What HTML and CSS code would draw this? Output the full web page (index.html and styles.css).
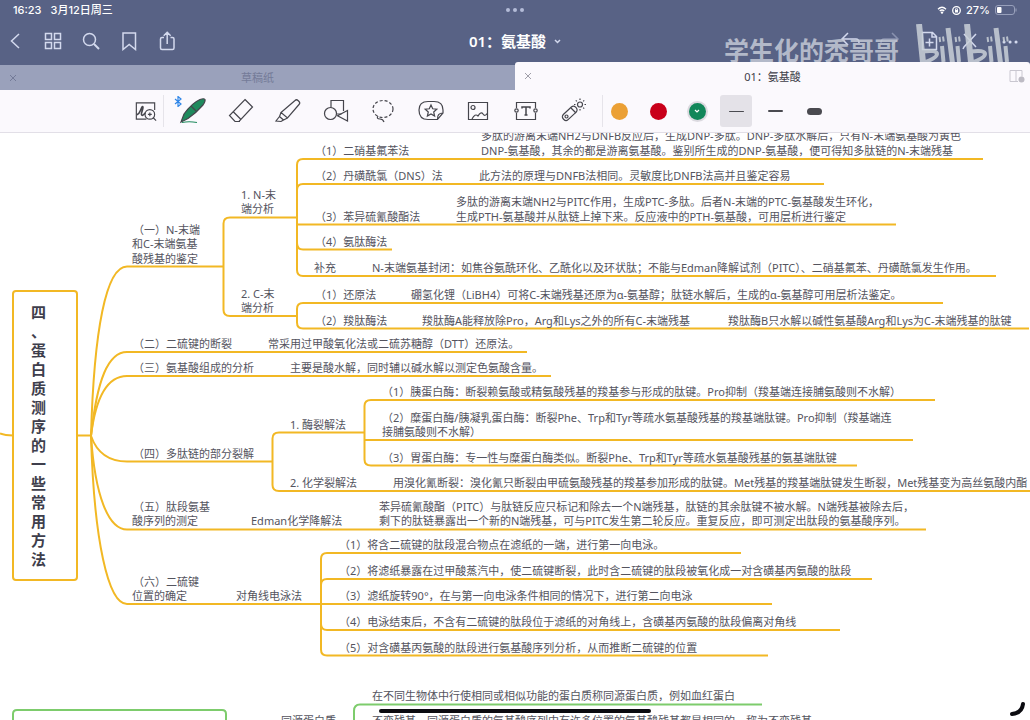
FILE: index.html
```html
<!DOCTYPE html>
<html lang="zh-CN">
<head>
<meta charset="utf-8">
<title>01：氨基酸</title>
<link rel="stylesheet" href="styles.css">
</head>
<body>
<header class="top">
	<div class="status">
		<div class="status-left"><span>16:23</span><span>3月12日周三</span></div>
		<div class="dots"><i></i><i></i><i></i></div>
		<div class="status-right">
			<svg width="10" height="8" viewBox="0 0 10 8"><path class="w" d="M1 3.2Q5-.6 9 3.2M2.7 5Q5 3 7.3 5"/><circle cx="5" cy="6.6" r="1.2" fill="#fff"/></svg>
			<svg width="9" height="9" viewBox="0 0 9 9"><circle class="w" cx="4.5" cy="4.5" r="3.8"/><rect x="3" y="4" width="3" height="2.5" fill="#fff"/><path d="M3.5 4V2.8h2V4" stroke="#fff" stroke-width=".8"/></svg>
			<span>27%</span>
			<svg width="22" height="10" viewBox="0 0 22 10"><rect x=".5" y=".5" width="19" height="9" rx="2.5" fill="none" stroke="#98a0bb"/><rect x="2" y="2" width="4.5" height="6" rx="1" fill="#fff"/><path d="M21 3.5v3" stroke="#98a0bb"/></svg>
		</div>
	</div>
	<nav class="nav">
		<div class="nav-left">
			<button aria-label="返回"><svg width="20" height="20" viewBox="0 0 20 20"><path d="M14 3L6.5 10l7.5 7"/></svg></button>
			<button aria-label="缩略图"><svg width="20" height="20" viewBox="0 0 20 20"><path d="M2.5 2.5h6v6h-6zM11.5 2.5h6v6h-6zM2.5 11.5h6v6h-6zM11.5 11.5h6v6h-6z"/></svg></button>
			<button aria-label="搜索"><svg width="20" height="20" viewBox="0 0 20 20"><circle cx="8.5" cy="8.5" r="6"/><path d="M13 13l5 5" stroke-width="2"/></svg></button>
			<button aria-label="书签"><svg width="20" height="20" viewBox="0 0 20 20"><path d="M4 2h12.5v16.5L10.2 13.5 4 18.5z"/></svg></button>
			<button aria-label="分享"><svg width="20" height="20" viewBox="0 0 20 20"><path d="M7 6.500H5q-1.500 0-1.500 1.500v9q0 1.500 1.500 1.500h10.500q1.500 0 1.500-1.500V8q0-1.500-1.500-1.500h-2M10.2 13V1.500M6.700 4.800l3.500-3.500 3.500 3.500"/></svg></button>
		</div>
		<button class="title">01：氨基酸 <svg width="7" height="5" viewBox="0 0 7 5"><path d="M1 1l2.5 2.5L6 1"/></svg></button>
		<div class="nav-right">
			<button aria-label="撤销"><svg width="20" height="20" viewBox="0 0 20 20"><path d="M2 8h14q3 0 3 4M8 2L2 8l6 6"/></svg></button>
			<button aria-label="重做" class="dim"><svg width="20" height="20" viewBox="0 0 20 20"><path d="M1 12q0-4 3-4h14M12 2l6 6-6 6"/></svg></button>
			<button aria-label="添加页面"><svg width="20" height="20" viewBox="0 0 20 20"><path d="M2.5 1.5h10l4 4v13h-14zM12 2v4h4.500M5.500 11.500h8M9.500 7.500v8"/></svg></button>
			<button aria-label="只读模式"><svg width="20" height="20" viewBox="0 0 20 20"><path d="M4 3l12 13M16 3L4 16l-1 2"/></svg></button>
			<button aria-label="更多"><svg width="20" height="20" viewBox="0 0 20 20"><path d="M4 11h.1M10 11h.1M16 11h.1" stroke-width="3" stroke-linecap="round"/></svg></button>
		</div>
		<div class="watermark">
			<span>学生化的秃哥哥</span>
			<svg width="96" height="38" viewBox="0 0 96 38" role="img" aria-label="bilibili">
				<g id="half">
					<path d="M5 0l4 38" stroke-width="6"/>
					<path d="M8 27.500q15-2 15 2.500 0 4-14 9" stroke-width="4"/>
					<path d="M34 4l4.500 35" stroke-width="5"/>
					<path d="M28 22l1.500 16M43.500 22l1.500 16" stroke-width="4"/>
					<path d="M25.500 13l.7 5M29 12.500l.7 5M41.500 13l.7 5M45 12.500l.7 5" stroke-width="2"/>
				</g>
				<use href="#half" x="48"/>
			</svg>
		</div>
	</nav>
</header>
<div class="tabs">
	<div class="tab">
		<button aria-label="关闭草稿纸"><svg width="8" height="8" viewBox="0 0 8 8"><path d="M1 1l6 6M7 1L1 7"/></svg></button>
		<a href="#draft">草稿纸</a>
	</div>
	<div class="tab active">
		<button aria-label="关闭01：氨基酸"><svg width="8" height="8" viewBox="0 0 8 8"><path d="M1 1l6 6M7 1L1 7"/></svg></button>
		<a href="#page">01：氨基酸</a>
		<button class="split" aria-label="分屏"><svg width="16" height="14" viewBox="0 0 16 14"><path d="M9 12.5H1V1.5h12v6M7 1.5v11"/><circle cx="12.5" cy="10.5" r="3" fill="#bdbbc4" stroke="none"/></svg></button>
	</div>
</div>
<div class="toolbar">
	<button class="lens" aria-label="缩放窗口"><svg width="28" height="28" viewBox="0 0 28 28"><path d="M15 22.500H4.500V5.500h19V13"/><path d="M5 18q2.500-1 4-5t2.200-3.500-.7 4.500 0 4.500 3-2.500" stroke-width="1.700"/><circle cx="18.500" cy="17.500" r="5"/><path d="M22 21l3 3M16.500 17.500h4M18.500 15.500v4"/></svg></button>
	<div class="tools">
		<button class="pen" aria-label="钢笔"><svg width="28" height="28" viewBox="0 0 28 28"><path d="M2 25l3-8Q13 6 21 2.500q4-1.500 5 0 .5 2-2 5.500Q17 16 9 21.500z" fill="#1f8a5d"/><path d="M12 9l5 5"/><path d="M3 25.500q7-1.500 15 0" stroke="#1f8a5d"/></svg>
			<svg class="bt" width="8" height="11" viewBox="0 0 8 11"><path d="M1 3l6 5-3 2.500V.5L7 3 1 8"/></svg></button>
		<button aria-label="橡皮擦"><svg width="28" height="28" viewBox="0 0 28 28"><path d="M18 2.500l7.500 7.500L12 24.500H8l-5.500-6L18 2.500zM6 14.500l8 8M8 24.500h5"/></svg></button>
		<button aria-label="荧光笔"><svg width="28" height="28" viewBox="0 0 28 28"><path d="M21 3.500q1.500-1.500 3 0l1 1q1.500 1.500 0 3L13.500 21 7 15.500zM7 15.500l-1.500 4 4 3.500 4-2M5.500 19.500L2 24l5 .5 2.500-1.500"/></svg></button>
		<button aria-label="形状"><svg width="28" height="28" viewBox="0 0 28 28"><circle cx="8.500" cy="16.500" r="6"/><path d="M9 10.500V3.500h12.500V14M14.500 17h5"/><path d="M25.500 13.500v10.500l-10-5.300z"/></svg></button>
		<button aria-label="套索"><svg width="28" height="28" viewBox="0 0 28 28"><ellipse cx="14" cy="12" rx="10" ry="8.500" stroke-dasharray="3 2"/><path d="M9 19q-2 3 2 3 3 0 4 3"/></svg></button>
		<button aria-label="贴纸"><svg width="28" height="28" viewBox="0 0 28 28"><path d="M26 16V13Q26 4.500 17 4.500h-6Q2 4.500 2 13q0 9.500 9 9.500h9.500zM26 16q-6 0-5.500 6.500"/><path d="M14 8l1.700 3.800 4.100.4-3.100 2.800.9 4.100-3.600-2.100-3.600 2.100.9-4.100-3.100-2.800 4.100-.4z"/></svg></button>
		<button aria-label="图片"><svg width="28" height="28" viewBox="0 0 28 28"><path d="M4.500 5.500h19v17h-19zM8 22q3-6 6-3 3-5 5-2t4.500-1"/><circle cx="9" cy="10.500" r="2"/></svg></button>
		<button aria-label="文本"><svg width="28" height="28" viewBox="0 0 28 28"><path d="M4.500 11V5.500h19V11M4.500 16v6.500h19V16"/><circle cx="4.500" cy="13.500" r="1.700"/><circle cx="23.500" cy="13.500" r="1.700"/><path d="M10 11.500V10h8v1.500M14 10v8M12.500 18h3" stroke-width="1.500"/></svg></button>
		<button aria-label="激光笔"><svg width="28" height="28" viewBox="0 0 28 28"><rect x="-7.500" y="-3.500" width="17" height="7" rx="3" transform="translate(10 17) rotate(-43)"/><circle cx="7.500" cy="19.500" r="1.500"/><path d="M12 11l5 5"/><circle cx="21" cy="7.500" r="2.500"/><path d="M21 1.500v1.500M21 12v1.500M15 7.500h1.500M25.500 7.500H27M16.800 3.300l1 1M24.200 10.700l1 1M25.200 3.300l-1 1"/></svg></button>
	</div>
	<div class="options">
		<button aria-label="橙色"><i class="dot orange"></i></button>
		<button aria-label="红色"><i class="dot red"></i></button>
		<button aria-label="绿色"><i class="dot green"><svg width="6" height="4" viewBox="0 0 6 4"><path d="M1 1l2 2 2-2"/></svg></i></button>
		<button class="on" aria-label="细"><i class="line thin"></i></button>
		<button aria-label="中"><i class="line mid"></i></button>
		<button aria-label="粗"><i class="line thick"></i></button>
	</div>
</div>
<main class="page" id="page">
	<svg class="map">
		<g class="scrolled">
			<!-- 主干 -->
			<path d="M0 433.500q5 2 13 2M78 435.500h13"/>
			<path d="M91 436C94 330 106 266.500 127 266.500H223.500"/>
			<path d="M91 436C97 380 108 352 127 352H527"/>
			<path d="M91 436C96 395 108 376 127 376H551"/>
			<path d="M91 436Q100 461.500 127 461.500H272.500"/>
			<path d="M91 436C95 495 108 529.500 127 529.500H926"/>
			<path d="M91 436C94 540 108 604 127 604H772"/>
			<!-- 分支 -->
			<path d="M297 217.500H230q-6.500 0-6.500 6V310q0 6 6.500 6H297"/>
			<path d="M983 159H303q-6 0-6 6V270q0 6 6 6H996M297 190q0-6 6-6H824M297 224.500H896M297 243q0 6.500 6 6.500H392"/>
			<path d="M943 303H303q-6 0-6 6v13.500q0 6 6 6H1029"/>
			<path d="M364.500 432.500H279q-6.500 0-6.500 6V485q0 6 6.500 6H1100"/>
			<path d="M935 400H371q-6.500 0-6.500 6v53.500q0 6 6.500 6H857M364.500 440H913"/>
			<path d="M741 553H327q-6 0-6 6v90.500q0 6 6 6H768M321 585q0-6 6-6H872M321 624q0 6 6 6H840"/>
			<path class="next" d="M13 730V714q0-4 4-4H222q4 0 4 4V730M354 730V711q0-6.500 6-6.500H762"/>

			<text x="133" y="234">（一）N-末端</text>
			<text x="132" y="248">和C-末端氨基</text>
			<text x="132" y="263">酸残基的鉴定</text>
			<text x="241" y="199">1. N-末</text>
			<text x="241" y="213">端分析</text>
			<text x="241" y="298">2. C-末</text>
			<text x="241" y="312">端分析</text>

			<text x="315" y="155">（1）二硝基氟苯法</text>
			<text x="481" y="140">多肽的游离末端NH2与DNFB反应后，生成DNP-多肽。DNP-多肽水解后，只有N-末端氨基酸为黄色</text>
			<text x="481" y="155">DNP-氨基酸，其余的都是游离氨基酸。鉴别所生成的DNP-氨基酸，便可得知多肽链的N-末端残基</text>
			<text x="315" y="180">（2）丹磺酰氯（DNS）法</text>
			<text x="479" y="180">此方法的原理与DNFB法相同。灵敏度比DNFB法高并且鉴定容易</text>
			<text x="315" y="221">（3）苯异硫氰酸酯法</text>
			<text x="456" y="206">多肽的游离末端NH2与PITC作用，生成PTC-多肽。后者N-末端的PTC-氨基酸发生环化，</text>
			<text x="456" y="221">生成PTH-氨基酸并从肽链上掉下来。反应液中的PTH-氨基酸，可用层析进行鉴定</text>
			<text x="315" y="246">（4）氨肽酶法</text>
			<text x="314" y="272">补充</text>
			<text x="372" y="272">N-末端氨基封闭：如焦谷氨酰环化、乙酰化以及环状肽；不能与Edman降解试剂（PITC）、二硝基氟苯、丹磺酰氯发生作用。</text>
			<text x="315" y="299">（1）还原法</text>
			<text x="411" y="299">硼氢化锂（LiBH4）可将C-末端残基还原为α-氨基醇；肽链水解后，生成的α-氨基醇可用层析法鉴定。</text>
			<text x="315" y="325">（2）羧肽酶法</text>
			<text x="422" y="325">羧肽酶A能释放除Pro，Arg和Lys之外的所有C-末端残基</text>
			<text x="728" y="325">羧肽酶B只水解以碱性氨基酸Arg和Lys为C-末端残基的肽键</text>

			<text x="133" y="348">（二）二硫键的断裂</text>
			<text x="268" y="348">常采用过甲酸氧化法或二硫苏糖醇（DTT）还原法。</text>
			<text x="133" y="372">（三）氨基酸组成的分析</text>
			<text x="290" y="372">主要是酸水解，同时辅以碱水解以测定色氨酸含量。</text>
			<text x="133" y="458">（四）多肽链的部分裂解</text>
			<text x="290" y="429">1. 酶裂解法</text>
			<text x="290" y="487">2. 化学裂解法</text>
			<text x="382" y="396">（1）胰蛋白酶：断裂赖氨酸或精氨酸残基的羧基参与形成的肽键。Pro抑制（羧基端连接脯氨酸则不水解）</text>
			<text x="382" y="422">（2）糜蛋白酶/胰凝乳蛋白酶：断裂Phe、Trp和Tyr等疏水氨基酸残基的羧基端肽键。Pro抑制（羧基端连</text>
			<text x="382" y="436">接脯氨酸则不水解）</text>
			<text x="382" y="462">（3）胃蛋白酶：专一性与糜蛋白酶类似。断裂Phe、Trp和Tyr等疏水氨基酸残基的氨基端肽键</text>
			<text x="393" y="487">用溴化氰断裂：溴化氰只断裂由甲硫氨酸残基的羧基参加形成的肽键。Met残基的羧基端肽键发生断裂，Met残基变为高丝氨酸内酯</text>

			<text x="133" y="511">（五）肽段氨基</text>
			<text x="132" y="525">酸序列的测定</text>
			<text x="251" y="525">Edman化学降解法</text>
			<text x="379" y="511">苯异硫氰酸酯（PITC）与肽链反应只标记和除去一个N端残基，肽链的其余肽键不被水解。N端残基被除去后，</text>
			<text x="379" y="525">剩下的肽链暴露出一个新的N端残基，可与PITC发生第二轮反应。重复反应，即可测定出肽段的氨基酸序列。</text>

			<text x="133" y="586">（六）二硫键</text>
			<text x="132" y="600">位置的确定</text>
			<text x="236" y="600">对角线电泳法</text>
			<text x="339" y="549">（1）将含二硫键的肽段混合物点在滤纸的一端，进行第一向电泳。</text>
			<text x="339" y="575">（2）将滤纸暴露在过甲酸蒸汽中，使二硫键断裂，此时含二硫键的肽段被氧化成一对含磺基丙氨酸的肽段</text>
			<text x="339" y="600">（3）滤纸旋转90°，在与第一向电泳条件相同的情况下，进行第二向电泳</text>
			<text x="339" y="626">（4）电泳结束后，不含有二硫键的肽段位于滤纸的对角线上，含磺基丙氨酸的肽段偏离对角线</text>
			<text x="339" y="652">（5）对含磺基丙氨酸的肽段进行氨基酸序列分析，从而推断二硫键的位置</text>

			<text x="372" y="700">在不同生物体中行使相同或相似功能的蛋白质称同源蛋白质，例如血红蛋白</text>
			<text x="281" y="725">同源蛋白质</text>
			<text x="372" y="725">不变残基，同源蛋白质的氨基酸序列中有许多位置的氨基酸残基都是相同的，称为不变残基</text>
		</g>
	</svg>
	<h1 class="root">四、蛋白质测序的一些常用方法</h1>
	<div class="home"></div>
	<svg class="curl" width="16" height="14" viewBox="0 0 16 14"><path d="M2 12q10-1 11-10"/></svg>
</main>
</body>
</html>
```
FILE: styles.css
```css
*{ margin:0; padding:0; box-sizing:border-box;}
body{ height:100vh; display:flex; flex-direction:column; overflow:hidden; background:#fff; font:11px/15px "Noto Sans","Noto Sans CJK SC",sans-serif; color:#54545e;}
button{ border:0; background:none; font:inherit; color:inherit; display:flex; align-items:center; justify-content:center;}
a{ color:inherit; text-decoration:none;}
svg{ display:block; fill:none;}

/* 顶部 */
.top{ background:#586285; color:#fff; height:62px; flex:none;}
.status{ display:grid; grid-template-columns:1fr auto 1fr; align-items:center; height:20px; padding:0 13px; font-family:Inter,"Noto Sans CJK SC",sans-serif; font-weight:500;}
.status-left{ display:flex; gap:9px;}
.status-right{ display:flex; gap:5px; justify-content:flex-end; align-items:center;}
.w{ stroke:#fff; stroke-width:1.3;}
.dots{ display:flex; gap:3px;}
.dots i{ width:4px; height:4px; border-radius:50%; background:#b4bcd8;}
.nav{ position:relative; display:grid; grid-template-columns:1fr auto 1fr; align-items:center; height:42px; padding:0 5px;}
.nav svg{ stroke:#d3d9ee; stroke-width:1.5;}
.nav-left{ display:flex; gap:18px;}
.nav-right{ display:flex; gap:20px; justify-content:flex-end; padding-right:5px;}
.dim{ opacity:.4;}
.title{ gap:8px; font-size:15px; font-weight:600;}
.watermark{ position:absolute; right:20px; bottom:0; display:flex; gap:15px; align-items:flex-end; height:38px; overflow:hidden; color:#c3c9d6; opacity:.85; pointer-events:none;}
.watermark span{ font-size:25px; line-height:26px; font-weight:700; font-family:"Noto Sans CJK SC",sans-serif;}
.watermark svg{ stroke:#c9d0d8;}

/* 标签页 */
.tabs{ display:flex; height:28px; flex:none; background:#586285; align-items:flex-end;}
.tab{ flex:1; display:grid; grid-template-columns:20px 1fr 20px; align-items:center; height:25px; padding:0 3px; background:#9aa1bb; color:#747b98; text-align:center;}
.tab svg{ stroke:#747b98;}
.active{ height:28px; background:#fbf9fd; color:#3f3f49; border-radius:3px 3px 0 0;}
.active svg{ stroke:#a09fa9;}
.tab .split svg{ stroke:#c9c7d0;}

/* 工具栏 */
.toolbar{ display:flex; align-items:center; height:43px; flex:none; padding-left:132px; background:#fbf9fd; border-bottom:1px solid #e2dfe7;}
.toolbar svg{ stroke:#45454c; stroke-width:1.2;}
.lens{ width:32px; height:32px; padding-right:4px; border-right:1px solid #e6e4ea;}
.tools{ display:flex; justify-content:space-between; width:408px; margin-left:15px;}
.tools button{ width:28px; height:32px;}
.pen{ position:relative;}
.toolbar .bt{ position:absolute; left:-5px; top:1px; stroke:#2f86e8;}
.options{ display:flex; gap:7px; margin-left:15px; border-left:1px solid #e6e4ea;}
.options button{ width:32px; height:32px;}
.options .on{ background:#e4e2e8; border-radius:3px;}
.dot{ width:17px; height:17px; border-radius:50%; display:flex; align-items:center; justify-content:center;}
.orange{ background:#eba035;}
.red{ background:#c9001a;}
.green{ background:#12875a; box-shadow:0 0 0 2px #dcdae0;}
.toolbar .green svg{ stroke:#fff;}
.line{ width:15px; border-radius:4px; background:#4a4a50;}
.thin{ height:1px;}
.mid{ height:2px;}
.thick{ height:7px;}

/* 思维导图 */
.page{ position:relative; flex:1; overflow:hidden;}
.map{ width:100%; height:100%;}
.scrolled{ transform:translateY(-133px);}
.map path{ stroke:#f2b824; stroke-width:2;}
.map .next{ stroke:#7dcc6c;}
.map text{ fill:#54545e;}
.root{ position:absolute; left:12px; top:157px; width:66px; padding:11px 24px 10px 17px; border:2px solid #f2b824; border-radius:4px; font-size:15px; line-height:19px; font-weight:700; color:#3e3e4c; word-break:break-all; line-break:anywhere;}
.home{ position:absolute; left:379px; right:379px; bottom:7px; height:4px; border-radius:2px; background:#0b0b10;}
.curl{ position:absolute; right:4px; bottom:4px; stroke:#0b0b10; stroke-width:4; stroke-linecap:round;}
```
